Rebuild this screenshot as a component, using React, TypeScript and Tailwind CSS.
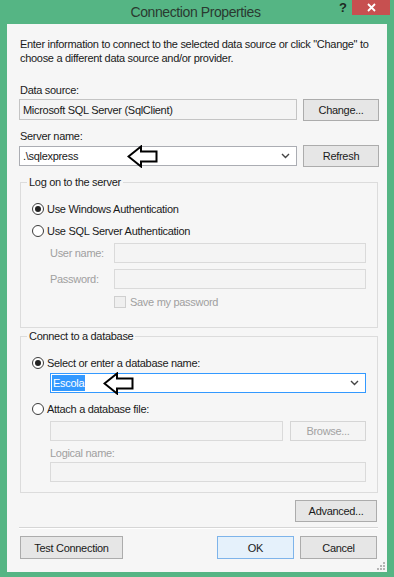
import React from 'react';

const font = { fontFamily: '"Liberation Sans", Arial, sans-serif' };

const Chevron = () => (
  <svg width="9" height="6" viewBox="0 0 9 6" className="shrink-0">
    <path d="M1 1 L4.5 4.5 L8 1" fill="none" stroke="#444" strokeWidth="1.4" />
  </svg>
);

const Arrow = ({ className }: { className?: string }) => (
  <svg width="31" height="23" viewBox="0 0 31 23" className={className}>
    <path d="M1.5 11.5 L14 1.5 L14 6.5 L29.5 6.5 L29.5 16.5 L14 16.5 L14 21.5 Z" fill="white" stroke="black" strokeWidth="2" strokeLinejoin="miter" />
  </svg>
);

const Radio = ({ checked, label }: { checked?: boolean; label: string }) => (
  <div className="flex items-center h-[14px] gap-[3px]">
    <span className="w-[12px] h-[12px] rounded-full border border-[#3c3c3c] bg-white flex items-center justify-center">
      {checked && <span className="w-[6px] h-[6px] rounded-full bg-[#222]" />}
    </span>
    <span>{label}</span>
  </div>
);

const Button = ({ children, className = '', disabled }: { children: React.ReactNode; className?: string; disabled?: boolean }) => (
  <div
    className={`flex items-center justify-center border ${disabled ? 'border-[#d5d5d5] bg-[#f4f4f4] text-[#a2a2a2]' : 'border-[#acacac] bg-[#e6e6e6] text-[#1a1a1a]'} ${className}`}
  >
    {children}
  </div>
);

export default function App() {
  return (
    <div className="w-[394px] h-[577px] bg-[#55b584] flex flex-col text-[11px] leading-[14px] tracking-[-0.3px] text-[#1a1a1a]" style={font}>
      {/* title bar */}
      <div className="h-[24px] flex items-start shrink-0">
        <div className="flex-1 h-[24px] flex items-center justify-center pl-[52px] text-[14px] tracking-[-0.4px] text-[#2a3a30]">
          Connection Properties
        </div>
        <div className="w-[13px] h-[15px] flex items-center text-[13px] font-bold text-[#1d2b22]">?</div>
        <div className="w-[38px] h-[15px] mr-[4px] bg-[#c75050] flex items-center justify-center">
          <svg width="9" height="9" viewBox="0 0 9 9">
            <path d="M1 1 L8 8 M8 1 L1 8" stroke="white" strokeWidth="1.8" />
          </svg>
        </div>
      </div>

      {/* client area */}
      <div className="mx-[7px] h-[548px] bg-[#f6f6f6] flex flex-col pl-[12px] pr-[9px] relative">
        <p className="mt-[13px] pl-[1px]">
          Enter information to connect to the selected data source or click "Change" to choose a different data source and/or provider.
        </p>

        <div className="mt-[18px] pl-[1px]">Data source:</div>
        <div className="mt-[2px] grid grid-cols-[278px_76px] gap-[6px] items-start">
          <div className="h-[21px] border border-[#c4c4c4] bg-[#f4f4f4] flex items-center pl-[3px]">Microsoft SQL Server (SqlClient)</div>
          <Button className="h-[22px]">Change...</Button>
        </div>

        <div className="mt-[8px] pl-[1px]">Server name:</div>
        <div className="mt-[2px] grid grid-cols-[278px_76px] gap-[6px] items-start">
          <div className="relative h-[20px] mt-[1px] border border-[#abadb3] bg-white flex items-center pl-[3px] pr-[6px]">
            <span className="flex-1">.\sqlexpress</span>
            <Chevron />
            <Arrow className="absolute left-[107px] top-[-2px]" />
          </div>
          <Button className="h-[22px]">Refresh</Button>
        </div>

        {/* log on group */}
        <fieldset className="mt-[8px] ml-[1px] border border-[#dcdcdc] pl-[11px] pr-[11px] pb-[18px]">
          <legend className="ml-[-5px] px-[2px] text-[#1a1a1a]">Log on to the server</legend>
          <div className="mt-[13px]">
            <Radio checked label="Use Windows Authentication" />
          </div>
          <div className="mt-[8px]">
            <Radio label="Use SQL Server Authentication" />
          </div>
          <div className="mt-[5px] flex items-center pl-[18px] text-[#a0a0a0]">
            <span className="w-[64px]">User name:</span>
            <div className="flex-1 h-[20px] border border-[#dadada] bg-[#f4f4f4]" />
          </div>
          <div className="mt-[6px] flex items-center pl-[18px] text-[#a0a0a0]">
            <span className="w-[64px]">Password:</span>
            <div className="flex-1 h-[20px] border border-[#dadada] bg-[#f4f4f4]" />
          </div>
          <div className="mt-[6px] flex items-center gap-[4px] pl-[82px] text-[#a0a0a0]">
            <span className="w-[12px] h-[12px] border border-[#cfcfcf] bg-[#efefef]" />
            <span>Save my password</span>
          </div>
        </fieldset>

        {/* database group */}
        <fieldset className="mt-[1px] ml-[1px] border border-[#dcdcdc] pl-[11px] pr-[11px] pb-[10px]">
          <legend className="ml-[-5px] px-[2px]">Connect to a database</legend>
          <div className="mt-[13px]">
            <Radio checked label="Select or enter a database name:" />
          </div>
          <div className="relative mt-[3px] ml-[18px] h-[20px] border border-[#3399ff] bg-white flex items-center pl-[1px] pr-[6px]">
            <span className="flex-1">
              <span className="bg-[#3399ff] text-white px-[1px] py-[2px]">Escola</span>
            </span>
            <Chevron />
            <Arrow className="absolute left-[52px] top-[-2px]" />
          </div>
          <div className="mt-[9px]">
            <Radio label="Attach a database file:" />
          </div>
          <div className="mt-[5px] ml-[18px] flex gap-[7px]">
            <div className="flex-1 h-[20px] border border-[#dadada] bg-[#f4f4f4]" />
            <Button disabled className="w-[76px] h-[20px]">Browse...</Button>
          </div>
          <div className="mt-[5px] ml-[18px] text-[#a0a0a0]">Logical name:</div>
          <div className="mt-[2px] ml-[18px] h-[20px] border border-[#dadada] bg-[#f4f4f4]" />
        </fieldset>

        <div className="mt-[7px] flex justify-end pr-[1px]">
          <Button className="w-[82px] h-[22px]">Advanced...</Button>
        </div>

        <div className="mt-[5px] h-[2px] border-t border-[#d6d6d6] border-b border-b-white" />

        <div className="mt-[7px] flex items-start pl-[1px] pr-[1px]">
          <Button className="w-[103px] h-[23px]">Test Connection</Button>
          <div className="flex-1" />
          <div className="w-[77px] h-[23px] border border-[#7eb4ea] bg-[#e5f1fb] flex items-center justify-center">OK</div>
          <Button className="ml-[6px] w-[77px] h-[23px]">Cancel</Button>
        </div>

        <svg width="8" height="8" viewBox="0 0 8 8" className="absolute right-[2px] bottom-[2px]">
          <rect x="6" y="0" width="2" height="2" fill="#b5b5b5" />
          <rect x="3" y="3" width="2" height="2" fill="#b5b5b5" />
          <rect x="6" y="3" width="2" height="2" fill="#b5b5b5" />
          <rect x="0" y="6" width="2" height="2" fill="#b5b5b5" />
          <rect x="3" y="6" width="2" height="2" fill="#b5b5b5" />
          <rect x="6" y="6" width="2" height="2" fill="#b5b5b5" />
        </svg>
      </div>
    </div>
  );
}
